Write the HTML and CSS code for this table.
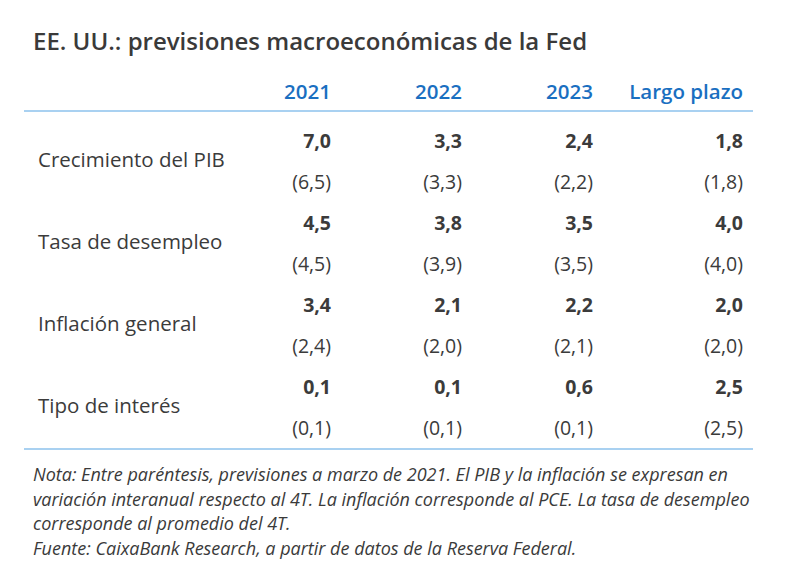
FILE: index.html
```html
<!DOCTYPE html>
<html lang="es">
<head>
<meta charset="utf-8">
<title>EE. UU.: previsiones macroeconómicas de la Fed</title>
<link rel="stylesheet" href="styles.css">
</head>
<body>
<div class="page">
  <h1 class="title">EE. UU.: previsiones macroeconómicas de la Fed</h1>
  <div class="table">
    <div class="head">
      <div class="cell label"></div>
      <div class="cell num">2021</div>
      <div class="cell num">2022</div>
      <div class="cell num">2023</div>
      <div class="cell num">Largo plazo</div>
    </div>
    <div class="body">
      <div class="group">
        <div class="label">Crecimiento del PIB</div>
        <div class="val">7,0</div><div class="val">3,3</div><div class="val">2,4</div><div class="val">1,8</div>
        <div class="prev">(6,5)</div><div class="prev">(3,3)</div><div class="prev">(2,2)</div><div class="prev">(1,8)</div>
      </div>
      <div class="group">
        <div class="label">Tasa de desempleo</div>
        <div class="val">4,5</div><div class="val">3,8</div><div class="val">3,5</div><div class="val">4,0</div>
        <div class="prev">(4,5)</div><div class="prev">(3,9)</div><div class="prev">(3,5)</div><div class="prev">(4,0)</div>
      </div>
      <div class="group">
        <div class="label">Inflación general</div>
        <div class="val">3,4</div><div class="val">2,1</div><div class="val">2,2</div><div class="val">2,0</div>
        <div class="prev">(2,4)</div><div class="prev">(2,0)</div><div class="prev">(2,1)</div><div class="prev">(2,0)</div>
      </div>
      <div class="group">
        <div class="label">Tipo de interés</div>
        <div class="val">0,1</div><div class="val">0,1</div><div class="val">0,6</div><div class="val">2,5</div>
        <div class="prev">(0,1)</div><div class="prev">(0,1)</div><div class="prev">(0,1)</div><div class="prev">(2,5)</div>
      </div>
    </div>
  </div>
  <div class="notes">
    <p>Nota: Entre paréntesis, previsiones a marzo de 2021. El PIB y la inflación se expresan en<br>variación interanual respecto al 4T. La inflación corresponde al PCE. La tasa de desempleo<br>corresponde al promedio del 4T.</p>
    <p>Fuente: CaixaBank Research, a partir de datos de la Reserva Federal.</p>
  </div>
</div>
</body>
</html>
```

FILE: styles.css
```css
* { box-sizing: border-box; }
html, body { margin: 0; padding: 0; background: #ffffff; }
body {
  font-family: "Open Sans", "Lato", sans-serif;
  color: #3b3b3b;
  width: 800px;
  height: 581px;
  overflow: hidden;
}
.page {
  padding: 25px 0 0 24px;
}
.title {
  margin: 0 0 0 9px;
  font-size: 24px;
  line-height: 32px;
  font-weight: 600;
  color: #3a3a3a;
  white-space: nowrap;
}
.table {
  width: 729px;
  margin-top: 13px;
}
.head, .group {
  display: grid;
  grid-template-columns: 200px 107px 131px 131px 150px;
  padding-right: 10px;
}
.head {
  height: 42px;
  border-bottom: 2px solid #a9d1f1;
  align-items: center;
  padding-top: 2px;
}
.head .num {
  text-align: right;
  color: #1a6fc1;
  font-weight: 600;
  font-size: 20.5px;
  white-space: nowrap;
}
.body {
  padding-top: 8px;
  border-bottom: 2px solid #a9d1f1;
}
.group {
  grid-template-rows: 41px 41px;
}
.group .label {
  grid-row: 1 / span 2;
  align-self: center;
  padding-left: 14px;
  padding-bottom: 4px;
  font-size: 20.5px;
  white-space: nowrap;
}
.val, .prev {
  text-align: right;
  font-size: 19.5px;
  line-height: 41px;
}
.val { font-weight: 700; }
.notes {
  margin: 12px 0 0 9px;
  font-style: italic;
  font-size: 18px;
  line-height: 24.7px;
  color: #3a3a3a;
  white-space: nowrap;
}
.notes p { margin: 0; }
```
